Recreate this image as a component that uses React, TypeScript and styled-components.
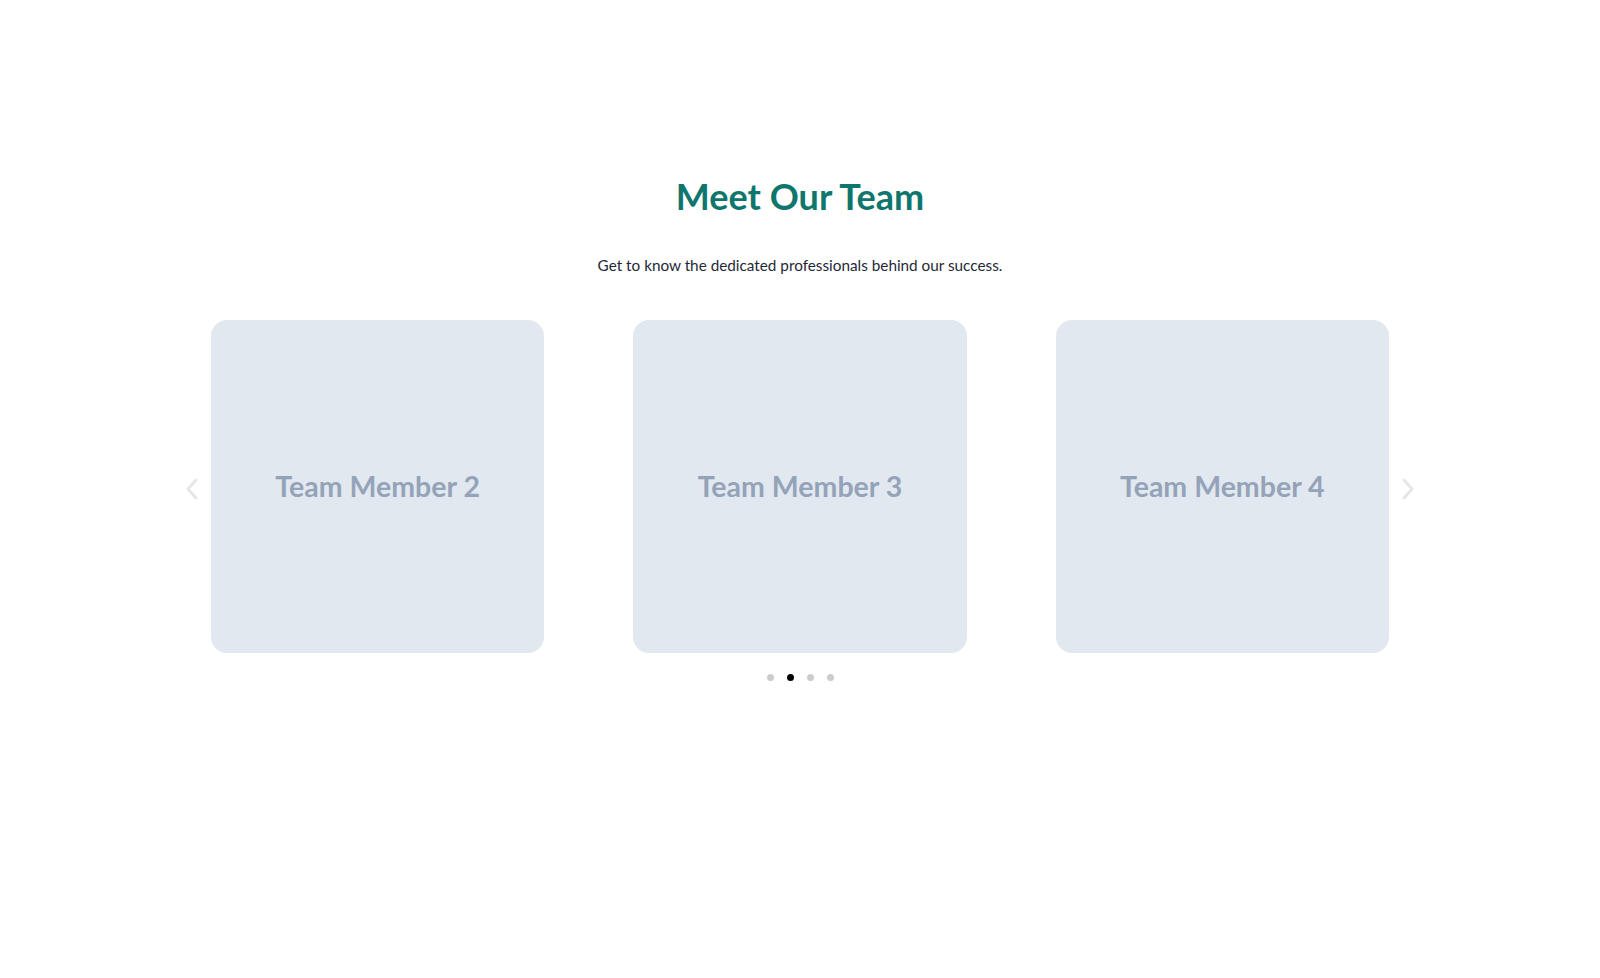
import React, { useState } from "react";
import styled, { createGlobalStyle } from "styled-components";

const members = ["Team Member 1", "Team Member 2", "Team Member 3", "Team Member 4", "Team Member 5"];

export default function App() {
  const [page, setPage] = useState(1);
  const visible = members.slice(page, page + 3);

  return (
    <>
      <GlobalStyle />
      <Section>
        <Title>Meet Our Team</Title>
        <Subtitle>Get to know the dedicated professionals behind our success.</Subtitle>
        <Carousel>
          <Arrow aria-label="Previous" onClick={() => setPage(Math.max(0, page - 1))}>
            <svg width="14" height="22" viewBox="0 0 14 22" fill="none">
              <polyline points="11,2 3,11 11,20" stroke="#e6e6e6" strokeWidth="3" strokeLinecap="round" strokeLinejoin="round" />
            </svg>
          </Arrow>
          <Track>
            {visible.map((name) => (
              <Card key={name}>
                <CardName>{name}</CardName>
              </Card>
            ))}
          </Track>
          <Arrow aria-label="Next" onClick={() => setPage(Math.min(3, page + 1))}>
            <svg width="14" height="22" viewBox="0 0 14 22" fill="none">
              <polyline points="3,2 11,11 3,20" stroke="#e6e6e6" strokeWidth="3" strokeLinecap="round" strokeLinejoin="round" />
            </svg>
          </Arrow>
        </Carousel>
        <Dots>
          {[0, 1, 2, 3].map((i) => (
            <Dot key={i} active={i === page} onClick={() => setPage(i)} />
          ))}
        </Dots>
      </Section>
    </>
  );
}

const GlobalStyle = createGlobalStyle`
  body {
    margin: 0;
    background: #fff;
    font-family: "Lato", "Noto Sans", sans-serif;
  }
`;

const Section = styled.section`
  display: flex;
  flex-direction: column;
  align-items: center;
  padding-top: 175px;
`;

const Title = styled.h2`
  margin: 0;
  font-family: "Lato", sans-serif;
  font-size: 36px;
  line-height: 43px;
  font-weight: 700;
  color: #0f766e;
`;

const Subtitle = styled.p`
  margin: 35px 0 0;
  font-family: "Lato", sans-serif;
  font-size: 15.3px;
  line-height: 24px;
  color: #1f2937;
`;

const Carousel = styled.div`
  display: flex;
  align-items: center;
  gap: 7px;
  width: 1240px;
  margin-top: 43px;
`;

const Arrow = styled.button`
  display: flex;
  align-items: center;
  justify-content: center;
  width: 24px;
  height: 40px;
  padding: 4px 0 0;
  border: none;
  background: none;
  cursor: pointer;
`;

const Track = styled.div`
  flex: 1;
  display: grid;
  grid-template-columns: repeat(3, 1fr);
  gap: 89px;
`;

const Card = styled.div`
  height: 333px;
  border-radius: 16px;
  background: #e2e8f0;
  display: flex;
  align-items: center;
  justify-content: center;
`;

const CardName = styled.span`
  font-family: "Lato", sans-serif;
  font-size: 28.5px;
  font-weight: 700;
  color: #94a3b8;
  margin-top: -2px;
`;

const Dots = styled.div`
  display: flex;
  gap: 13px;
  margin-top: 21px;
`;

const Dot = styled.span<{ active: boolean }>`
  width: 7px;
  height: 7px;
  border-radius: 50%;
  background: ${(p) => (p.active ? "#000" : "#cccccc")};
  cursor: pointer;
`;
